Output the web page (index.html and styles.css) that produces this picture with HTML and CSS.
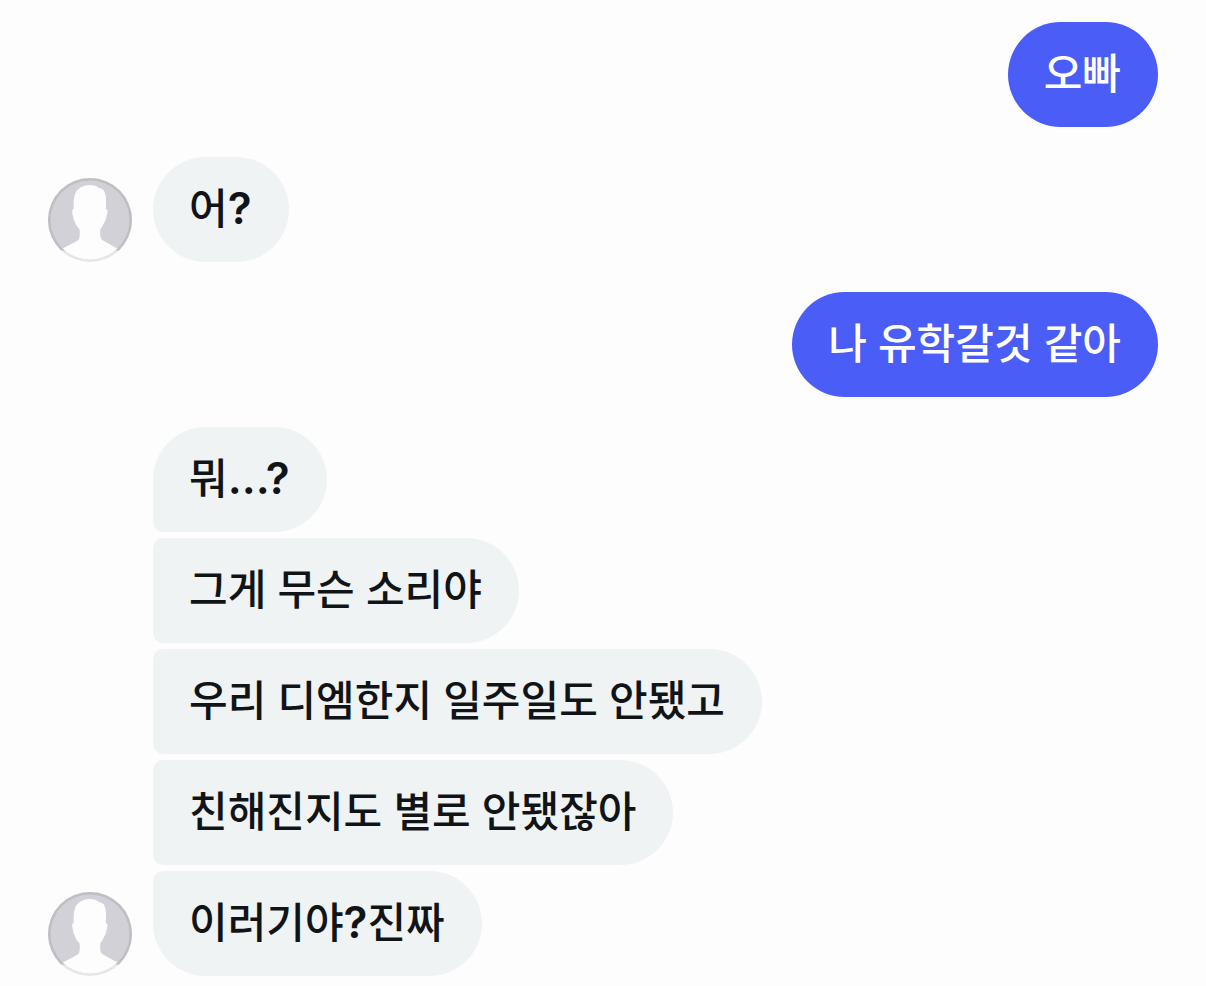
FILE: index.html
```html
<!DOCTYPE html>
<html lang="ko">
<head>
    <meta charset="UTF-8">
    <meta name="viewport" content="width=device-width, initial-scale=1.0">
    <title>Chat</title>
    <link rel="stylesheet" href="styles.css">
</head>
<body>
    <svg class="defs" aria-hidden="true">
        <symbol id="avatar" viewBox="0 0 84 84">
            <clipPath id="circle"><circle cx="42" cy="42" r="39.5"/></clipPath>
            <circle cx="42" cy="42" r="42" fill="#e6e6e8"/>
            <path d="M13 72.400A42 42 0 1 1 71 72.400Z" fill="#bfbec3"/>
            <g clip-path="url(#circle)">
                <rect width="84" height="84" fill="#d2d1d8"/>
                <path d="M42 7C46 7 49 8 51 10C55 10.500 57 13 57.700 18C58.200 22 58.200 27 57.700 31C60 31 59.800 35 58.500 38C58.200 41 57.500 43 56.500 44C55 47 54 49 52.500 51C52 54 52 57 52.500 59C53 61 54 62 56 63L73 72.500V84H11V72.500L28 63.500C30.500 62 31.500 61 31.500 59C32 56 32 53 31.300 51C29 49 27.500 46 26.500 43C25.500 42 25.300 40 25 38C24 35 23.500 31 25.800 31C25.300 27 25.600 22 26.500 18C28 11 34 7 42 7Z" fill="#fdfdfd"/>
            </g>
        </symbol>
    </svg>

    <main class="chat">
        <div class="group sent">
            <p class="bubble">오빠</p>
        </div>
        <div class="group received">
            <svg class="avatar" role="img" aria-label="Profile"><use href="#avatar"/></svg>
            <div class="messages">
                <p class="bubble">어<span class="mark">?</span></p>
            </div>
        </div>
        <div class="group sent">
            <p class="bubble">나 유학갈것 같아</p>
        </div>
        <div class="group received">
            <svg class="avatar" role="img" aria-label="Profile"><use href="#avatar"/></svg>
            <div class="messages">
                <p class="bubble">뭐<span class="mark">...?</span></p>
                <p class="bubble">그게 무슨 소리야</p>
                <p class="bubble">우리 디엠한지 일주일도 안됐고</p>
                <p class="bubble">친해진지도 별로 안됐잖아</p>
                <p class="bubble">이러기야<span class="mark">?</span>진짜</p>
            </div>
        </div>
    </main>
</body>
</html>
```
FILE: styles.css
```css
body {
    margin: 0;
    background-color: #fdfdfd;
    color: #111417;
    font-family: Inter, "Noto Sans CJK KR", sans-serif;
    font-size: 42px;
    font-weight: 500;
    line-height: 60px;
}
.defs {
    position: absolute;
    width: 0;
    height: 0;
}
.chat {
    display: flex;
    flex-direction: column;
    gap: 30px;
    padding: 22px 48px 10px;
}
.group {
    display: flex;
}
.sent {
    justify-content: flex-end;
}
.received {
    align-items: flex-end;
    gap: 21px;
}
.avatar {
    flex: none;
    width: 84px;
    height: 84px;
}
.messages {
    display: flex;
    flex-direction: column;
    align-items: flex-start;
    gap: 6px;
}
.bubble {
    margin: 0;
    padding: 22px 37px 23px 36px;
    border-radius: 53px;
    background-color: #eff3f4;
}
.sent .bubble {
    background-color: #4a5df7;
    color: #fff;
}
.messages .bubble:not(:last-child) {
    border-bottom-left-radius: 10px;
}
.messages .bubble:not(:first-child) {
    border-top-left-radius: 10px;
}
/* punctuation is a bit heavier than the hangul */
.mark {
    font-size: 44px;
    font-weight: 600;
    line-height: 1;
}
```
